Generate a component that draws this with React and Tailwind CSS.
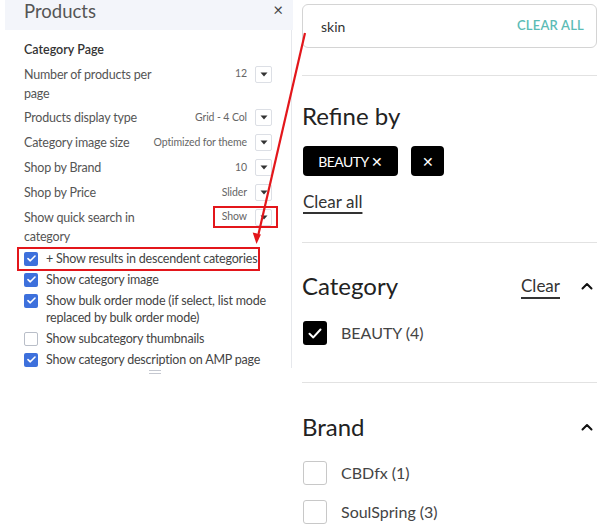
import React from 'react';

const leftFont = { fontFamily: '"Source Sans Pro", Lato, "Noto Sans", sans-serif' };
const rightFont = { fontFamily: 'Lato, "Noto Sans", sans-serif' };

const settingRows = [
  { label: 'Number of products per page', value: '12', wrap: true },
  { label: 'Products display type', value: 'Grid - 4 Col' },
  { label: 'Category image size', value: 'Optimized for theme' },
  { label: 'Shop by Brand', value: '10' },
  { label: 'Shop by Price', value: 'Slider' },
  { label: 'Show quick search in category', value: 'Show', wrap: true },
];

const checkRows = [
  { label: '+ Show results in descendent categories', checked: true },
  { label: 'Show category image', checked: true },
  { label: 'Show bulk order mode (if select, list mode replaced by bulk order mode)', checked: true },
  { label: 'Show subcategory thumbnails', checked: false },
  { label: 'Show category description on AMP page', checked: true },
];

function Caret() {
  return (
    <svg width="8" height="5" viewBox="0 0 8 5" aria-hidden>
      <path d="M0.5 0.5h7L4 4.5z" fill="#333" />
    </svg>
  );
}

function SettingRow({ label, value, wrap }) {
  return (
    <div className={`flex min-h-[25px] justify-between ${wrap ? 'items-start py-[2.5px]' : 'items-center py-[3px]'}`}>
      <div className={`text-[12.5px] tracking-[-0.2px] text-[#555] ${wrap ? 'w-[135px] leading-[19px]' : 'leading-[18px]'}`}>{label}</div>
      <div className={`flex items-center gap-[8px] ${wrap ? 'mt-px' : ''}`}>
        <span className="text-[10.5px] tracking-[-0.1px] text-[#666]">{value}</span>
        <span className="flex h-[17px] w-[17px] items-center justify-center rounded-[2px] border border-[#dcdfe5] bg-white">
          <Caret />
        </span>
      </div>
    </div>
  );
}

function BlueCheck({ checked }) {
  if (!checked) {
    return <span className="mt-[1.5px] h-[14px] w-[14px] shrink-0 rounded-[2px] border border-[#b9bec8] bg-white" />;
  }
  return (
    <span className="mt-[1.5px] flex h-[14px] w-[14px] shrink-0 items-center justify-center rounded-[2px] bg-[#3d70dc]">
      <svg width="9" height="7" viewBox="0 0 9 7" aria-hidden>
        <path d="M1 3.6l2.3 2.2L8 1" stroke="white" strokeWidth="1.6" fill="none" strokeLinecap="round" strokeLinejoin="round" />
      </svg>
    </span>
  );
}

function Chevron() {
  return (
    <svg width="12" height="8" viewBox="0 0 12 8" aria-hidden>
      <path d="M1.5 6.5L6 2l4.5 4.5" stroke="#111" strokeWidth="2" fill="none" strokeLinecap="round" strokeLinejoin="round" />
    </svg>
  );
}

function FilterBox({ checked, label }) {
  return (
    <div className="flex items-center gap-[14px]">
      {checked ? (
        <span className="flex h-[24px] w-[24px] items-center justify-center rounded-[3px] bg-black">
          <svg width="14" height="11" viewBox="0 0 14 11" aria-hidden>
            <path d="M1.5 5.8l3.8 3.6L12.5 1.5" stroke="white" strokeWidth="2" fill="none" strokeLinecap="round" strokeLinejoin="round" />
          </svg>
        </span>
      ) : (
        <span className="h-[24px] w-[24px] rounded-[3px] border border-[#c8c8c8] bg-white" />
      )}
      <span className="text-[16px] text-[#444]">{label}</span>
    </div>
  );
}

export default function App() {
  return (
    <div className="relative flex h-[532px] w-[601px] overflow-hidden bg-white">
      {/* settings panel */}
      <div className="w-[302px] shrink-0" style={leftFont}>
        <div className="ml-[5px] flex h-[30px] w-[288px] items-start justify-between bg-[#f3f5fa] pl-[19px] pr-[10px]">
          <span className="text-[18.5px] leading-[22px] text-[#555]">Products</span>
          <span className="mt-px text-[17px] leading-[18px] text-[#444]">×</span>
        </div>
        <div className="ml-[5px] h-[338px] w-[287px] overflow-hidden border-r border-[#e6e8ec] pl-[19px] pr-[19px]">
          <div className="mt-[11px] mb-[3px] text-[12.5px] font-semibold leading-[18px] text-[#333]">Category Page</div>
          {settingRows.map((r) => (
            <SettingRow key={r.label} {...r} />
          ))}
          {checkRows.map((r) => (
            <div key={r.label} className="flex min-h-[21px] items-start gap-[8px] py-[2px]">
              <BlueCheck checked={r.checked} />
              <span className="w-[225px] text-[12.5px] leading-[17px] tracking-[-0.2px] text-[#444]">{r.label}</span>
            </div>
          ))}
        </div>
        <div className="ml-[149px] mt-[2px] flex w-[12px] flex-col gap-[2px]">
          <span className="h-px bg-[#c5c8d0]" />
          <span className="h-px bg-[#c5c8d0]" />
        </div>
      </div>

      {/* storefront filter */}
      <div className="w-[295px] shrink-0 pt-[4px]" style={rightFont}>
        <div className="flex h-[44px] items-center justify-between rounded-md border border-[#d4d4d4] pl-[18px] pr-[12px]">
          <span className="text-[14px] text-[#333]">skin</span>
          <span className="text-[13px] font-semibold tracking-[0.2px] text-[#5cbcb6]">CLEAR ALL</span>
        </div>
        <div className="mt-[27px] border-t border-[#e2e2e2]" />
        <div className="mt-[25px] text-[24px] leading-[30px] text-[#222]">Refine by</div>
        <div className="mt-[15px] flex gap-[13px] pl-px">
          <span className="flex h-[30px] w-[95px] items-center justify-center rounded-[4px] bg-black text-[14px] tracking-[-0.5px] text-white">BEAUTY ✕</span>
          <span className="flex h-[30px] w-[33px] items-center justify-center rounded-[4px] bg-black text-[14px] text-white">✕</span>
        </div>
        <div className="mt-[15px] pl-px text-[17px] leading-[22px] text-[#333]">
          <span className="underline decoration-[1.5px] underline-offset-[4px]">Clear all</span>
        </div>
        <div className="mt-[29px] border-t border-[#e2e2e2]" />
        <div className="mt-[28px] flex items-center justify-between pr-[4px]">
          <span className="text-[24px] leading-[30px] text-[#222]">Category</span>
          <div className="flex items-center gap-[21px]">
            <span className="text-[17px] text-[#333] underline decoration-[1.5px] underline-offset-[5px]">Clear</span>
            <Chevron />
          </div>
        </div>
        <div className="mt-[20px] pl-px">
          <FilterBox checked label="BEAUTY (4)" />
        </div>
        <div className="mt-[37px] border-t border-[#e2e2e2]" />
        <div className="mt-[29px] flex items-center justify-between pr-[4px]">
          <span className="text-[24px] leading-[30px] text-[#222]">Brand</span>
          <Chevron />
        </div>
        <div className="mt-[19px] flex flex-col gap-[15px] pl-px">
          <FilterBox label="CBDfx (1)" />
          <FilterBox label="SoulSpring (3)" />
        </div>
      </div>

      {/* red annotations */}
      <div className="pointer-events-none absolute left-[213px] top-[206px] h-[22px] w-[65px] border-2 border-[#e3161b]" />
      <div className="pointer-events-none absolute left-[17px] top-[247px] h-[24px] w-[243px] border-2 border-[#e3161b]" />
      <svg className="pointer-events-none absolute left-0 top-0" width="601" height="532" aria-hidden>
        <line x1="305" y1="33" x2="258.5" y2="234" stroke="#e3161b" strokeWidth="2.2" />
        <path d="M256.5 244l-3.8-11.5 8.2 1.9z" fill="#e3161b" />
      </svg>
    </div>
  );
}
